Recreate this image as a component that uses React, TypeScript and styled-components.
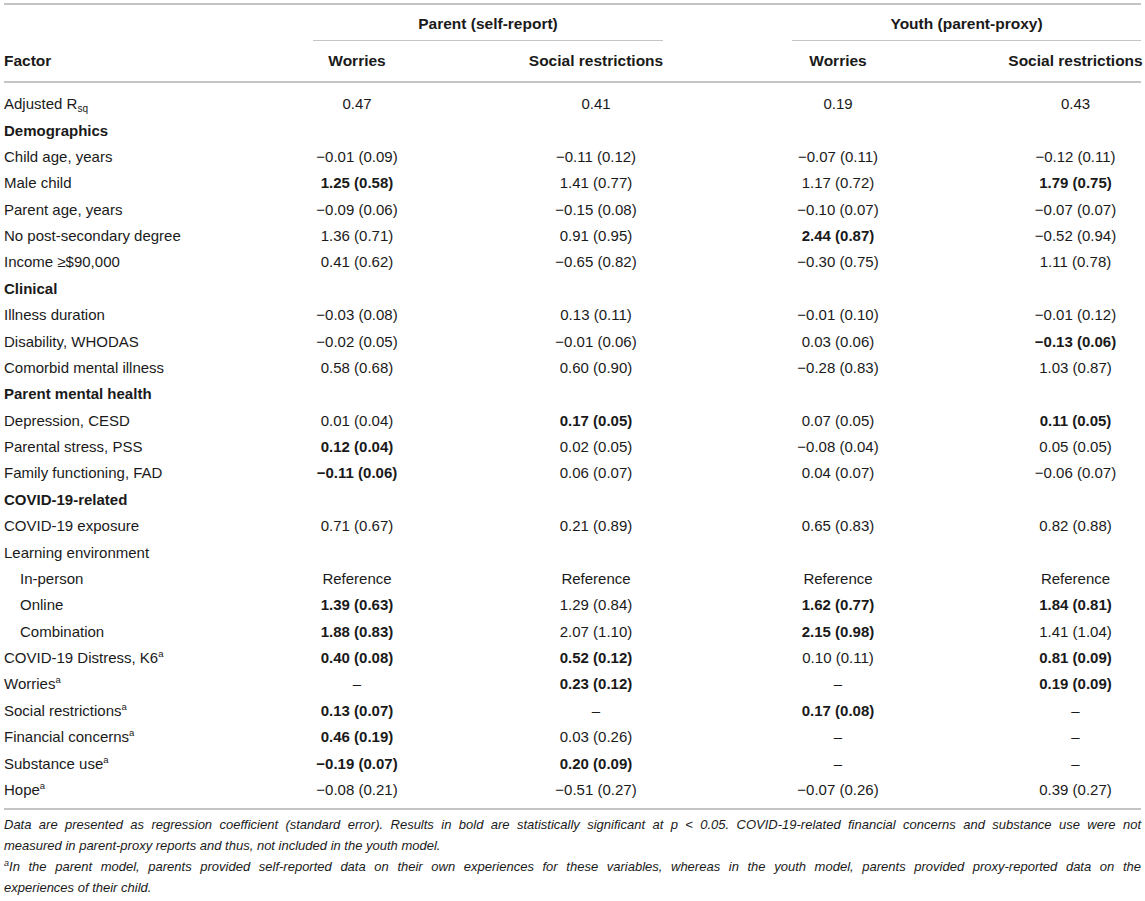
import React from "react";
import styled, { createGlobalStyle } from "styled-components";

const GlobalStyle = createGlobalStyle`
  html, body { margin: 0; padding: 0; background: #ffffff; }
  body { font-family: "Liberation Sans", Arial, Helvetica, sans-serif; color: #1a1a1a; }
`;

const COLS = "309px 88px 128px 134px 129px 92px 126px 131px";
const DATA_COLS = [2, 4, 6, 8];

const Page = styled.div`
  padding: 3px 4px 0 4px;
  width: 1137px;
`;

const Table = styled.div`
  border-top: 2px solid #c4c4c4;
  border-bottom: 2px solid #c4c4c4;
`;

const Head = styled.div`
  display: grid;
  grid-template-columns: ${COLS};
  grid-template-rows: 36px 40px;
  border-bottom: 2px solid #c4c4c4;
  font-size: 15.5px;
  font-weight: 700;
`;

const GroupLabel = styled.div<{ $start: number }>`
  grid-row: 1;
  grid-column: ${(p) => p.$start} / span 3;
  border-bottom: 1px solid #c4c4c4;
  display: flex;
  align-items: center;
  justify-content: center;
  padding-top: 3px;
`;

const FactorHead = styled.div`
  grid-row: 2;
  grid-column: 1;
  display: flex;
  align-items: center;
`;

const ColHead = styled.div<{ $col: number }>`
  grid-row: 2;
  grid-column: ${(p) => p.$col};
  display: flex;
  align-items: center;
  justify-content: center;
  white-space: nowrap;
`;

const Body = styled.div`
  padding: 8px 0 5px 0;
`;

const Row = styled.div`
  display: grid;
  grid-template-columns: ${COLS};
  height: 26.38px;
  align-items: center;
  font-size: 15px;
  line-height: 18px;
`;

const Label = styled.div<{ $kind: "cat" | "row" | "sub" }>`
  grid-column: 1;
  white-space: nowrap;
  font-weight: ${(p) => (p.$kind === "cat" ? 700 : 400)};
  padding-left: ${(p) => (p.$kind === "sub" ? "16px" : "0")};
`;

const Cell = styled.div<{ $col: number; $bold: boolean }>`
  grid-column: ${(p) => p.$col};
  text-align: center;
  white-space: nowrap;
  font-weight: ${(p) => (p.$bold ? 700 : 400)};
`;

const Sup = styled.sup`
  font-size: 9.5px;
  line-height: 0;
  vertical-align: 6px;
`;

const Sub = styled.sub`
  font-size: 10px;
  line-height: 0;
  vertical-align: -3px;
`;

const Notes = styled.div`
  margin-top: 4px;
  font-size: 13px;
  font-style: italic;
  line-height: 21px;
`;

const NoteLine = styled.div<{ $justify: boolean }>`
  text-align: ${(p) => (p.$justify ? "justify" : "left")};
  text-align-last: ${(p) => (p.$justify ? "justify" : "left")};
  white-space: nowrap;
`;

const NoteSup = styled.sup`
  font-size: 9px;
  line-height: 0;
  vertical-align: 5px;
`;

type Kind = "cat" | "row" | "sub";
type RowDef = { label: React.ReactNode; kind: Kind; values?: string[] };

const a = <Sup>a</Sup>;

const rows: RowDef[] = [
  { label: <>Adjusted R<Sub>sq</Sub></>, kind: "row", values: ["0.47", "0.41", "0.19", "0.43"] },
  { label: "Demographics", kind: "cat" },
  { label: "Child age, years", kind: "row", values: ["−0.01 (0.09)", "−0.11 (0.12)", "−0.07 (0.11)", "−0.12 (0.11)"] },
  { label: "Male child", kind: "row", values: ["*1.25 (0.58)", "1.41 (0.77)", "1.17 (0.72)", "*1.79 (0.75)"] },
  { label: "Parent age, years", kind: "row", values: ["−0.09 (0.06)", "−0.15 (0.08)", "−0.10 (0.07)", "−0.07 (0.07)"] },
  { label: "No post-secondary degree", kind: "row", values: ["1.36 (0.71)", "0.91 (0.95)", "*2.44 (0.87)", "−0.52 (0.94)"] },
  { label: "Income ≥$90,000", kind: "row", values: ["0.41 (0.62)", "−0.65 (0.82)", "−0.30 (0.75)", "1.11 (0.78)"] },
  { label: "Clinical", kind: "cat" },
  { label: "Illness duration", kind: "row", values: ["−0.03 (0.08)", "0.13 (0.11)", "−0.01 (0.10)", "−0.01 (0.12)"] },
  { label: "Disability, WHODAS", kind: "row", values: ["−0.02 (0.05)", "−0.01 (0.06)", "0.03 (0.06)", "*−0.13 (0.06)"] },
  { label: "Comorbid mental illness", kind: "row", values: ["0.58 (0.68)", "0.60 (0.90)", "−0.28 (0.83)", "1.03 (0.87)"] },
  { label: "Parent mental health", kind: "cat" },
  { label: "Depression, CESD", kind: "row", values: ["0.01 (0.04)", "*0.17 (0.05)", "0.07 (0.05)", "*0.11 (0.05)"] },
  { label: "Parental stress, PSS", kind: "row", values: ["*0.12 (0.04)", "0.02 (0.05)", "−0.08 (0.04)", "0.05 (0.05)"] },
  { label: "Family functioning, FAD", kind: "row", values: ["*−0.11 (0.06)", "0.06 (0.07)", "0.04 (0.07)", "−0.06 (0.07)"] },
  { label: "COVID-19-related", kind: "cat" },
  { label: "COVID-19 exposure", kind: "row", values: ["0.71 (0.67)", "0.21 (0.89)", "0.65 (0.83)", "0.82 (0.88)"] },
  { label: "Learning environment", kind: "row" },
  { label: "In-person", kind: "sub", values: ["Reference", "Reference", "Reference", "Reference"] },
  { label: "Online", kind: "sub", values: ["*1.39 (0.63)", "1.29 (0.84)", "*1.62 (0.77)", "*1.84 (0.81)"] },
  { label: "Combination", kind: "sub", values: ["*1.88 (0.83)", "2.07 (1.10)", "*2.15 (0.98)", "1.41 (1.04)"] },
  { label: <>COVID-19 Distress, K6{a}</>, kind: "row", values: ["*0.40 (0.08)", "*0.52 (0.12)", "0.10 (0.11)", "*0.81 (0.09)"] },
  { label: <>Worries{a}</>, kind: "row", values: ["–", "*0.23 (0.12)", "–", "*0.19 (0.09)"] },
  { label: <>Social restrictions{a}</>, kind: "row", values: ["*0.13 (0.07)", "–", "*0.17 (0.08)", "–"] },
  { label: <>Financial concerns{a}</>, kind: "row", values: ["*0.46 (0.19)", "0.03 (0.26)", "–", "–"] },
  { label: <>Substance use{a}</>, kind: "row", values: ["*−0.19 (0.07)", "*0.20 (0.09)", "–", "–"] },
  { label: <>Hope{a}</>, kind: "row", values: ["−0.08 (0.21)", "−0.51 (0.27)", "−0.07 (0.26)", "0.39 (0.27)"] },
];

const colHeads = ["Worries", "Social restrictions", "Worries", "Social restrictions"];

export default function App() {
  return (
    <Page>
      <GlobalStyle />
      <Table>
        <Head>
          <GroupLabel $start={2}>Parent (self-report)</GroupLabel>
          <GroupLabel $start={6}>Youth (parent-proxy)</GroupLabel>
          <FactorHead>Factor</FactorHead>
          {colHeads.map((h, i) => (
            <ColHead key={i} $col={DATA_COLS[i]}>
              {h}
            </ColHead>
          ))}
        </Head>
        <Body>
          {rows.map((r, i) => (
            <Row key={i}>
              <Label $kind={r.kind}>{r.label}</Label>
              {r.values?.map((v, j) => {
                const bold = v.startsWith("*");
                return (
                  <Cell key={j} $col={DATA_COLS[j]} $bold={bold}>
                    {bold ? v.slice(1) : v}
                  </Cell>
                );
              })}
            </Row>
          ))}
        </Body>
      </Table>
      <Notes>
        <NoteLine $justify>
          Data are presented as regression coefficient (standard error). Results in bold are statistically significant at p &lt; 0.05. COVID-19-related financial concerns and substance use were not
        </NoteLine>
        <NoteLine $justify={false}>measured in parent-proxy reports and thus, not included in the youth model.</NoteLine>
        <NoteLine $justify>
          <NoteSup>a</NoteSup>In the parent model, parents provided self-reported data on their own experiences for these variables, whereas in the youth model, parents provided proxy-reported data on the
        </NoteLine>
        <NoteLine $justify={false}>experiences of their child.</NoteLine>
      </Notes>
    </Page>
  );
}
